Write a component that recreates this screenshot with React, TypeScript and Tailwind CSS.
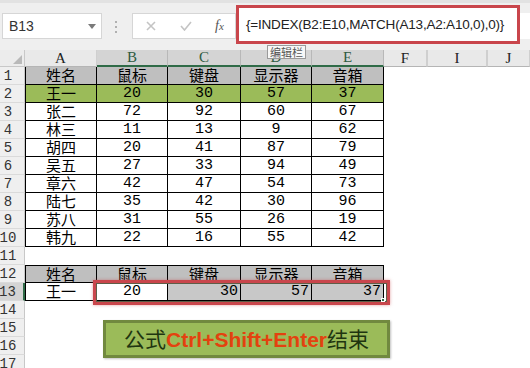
import React from 'react';

const GRID = 'grid grid-cols-[25px_72px_71px_73px_71px_72px_43px_60px_1fr]';
const CJK = "font-['Noto_Sans_CJK_SC',sans-serif]";
const MONO = "font-['Liberation_Mono',monospace]";

type Kind = 'head' | 'green' | 'data' | 'empty' | 'result';

interface SheetRow {
  n: number;
  kind: Kind;
  cells?: (string | number)[];
}

const header = ['姓名', '鼠标', '键盘', '显示器', '音箱'];

const rows: SheetRow[] = [
  { n: 1, kind: 'head', cells: header },
  { n: 2, kind: 'green', cells: ['王一', 20, 30, 57, 37] },
  { n: 3, kind: 'data', cells: ['张二', 72, 92, 60, 67] },
  { n: 4, kind: 'data', cells: ['林三', 11, 13, 9, 62] },
  { n: 5, kind: 'data', cells: ['胡四', 20, 41, 87, 79] },
  { n: 6, kind: 'data', cells: ['吴五', 27, 33, 94, 49] },
  { n: 7, kind: 'data', cells: ['章六', 42, 47, 54, 73] },
  { n: 8, kind: 'data', cells: ['陆七', 35, 42, 30, 96] },
  { n: 9, kind: 'data', cells: ['苏八', 31, 55, 26, 19] },
  { n: 10, kind: 'data', cells: ['韩九', 22, 16, 55, 42] },
  { n: 11, kind: 'empty' },
  { n: 12, kind: 'head', cells: header },
  { n: 13, kind: 'result', cells: ['王一', 20, 30, 57, 37] },
  { n: 14, kind: 'empty' },
  { n: 15, kind: 'empty' },
  { n: 16, kind: 'empty' },
  { n: 17, kind: 'empty' },
];

const columns = [
  { label: 'A', selected: false },
  { label: 'B', selected: true },
  { label: 'C', selected: true },
  { label: 'D', selected: true },
  { label: 'E', selected: true },
  { label: 'F', selected: false },
  { label: 'I', selected: false },
  { label: 'J', selected: false },
];

const Toolbar: React.FC = () => (
  <div className="h-[50px] flex items-start bg-[#efefef] border-t-[3px] border-[#e2e2e2]">
    <div className="ml-[2px] mt-[10px] w-[100px] h-[26px] bg-white border border-[#d6d6d6] flex items-center justify-between pl-[6px] pr-[5px]">
      <span className="font-['Liberation_Sans',sans-serif] text-[14px] leading-[16px] text-[#333]">B13</span>
      <svg width="8" height="5" viewBox="0 0 8 5">
        <path d="M0 0h8L4 5z" fill="#7a7a7a" />
      </svg>
    </div>
    <div className="ml-[13px] mt-[18px] flex flex-col gap-[3px]">
      <span className="w-[2px] h-[2px] bg-[#b0b0b0]" />
      <span className="w-[2px] h-[2px] bg-[#b0b0b0]" />
      <span className="w-[2px] h-[2px] bg-[#b0b0b0]" />
    </div>
    <div className="ml-[15px] mt-[10px] w-[104px] h-[26px] bg-white border border-[#d6d6d6] flex items-center">
      <svg className="ml-[13px]" width="10" height="10" viewBox="0 0 10 10">
        <path d="M1 1l8 8M9 1l-8 8" stroke="#c4c4c4" strokeWidth="1.6" />
      </svg>
      <svg className="ml-[24px]" width="12" height="10" viewBox="0 0 12 10">
        <path d="M1 5l3.5 4L11 1" stroke="#c4c4c4" strokeWidth="1.6" fill="none" />
      </svg>
      <span className="ml-[23px] font-['Liberation_Serif',serif] italic text-[14px] leading-[16px] text-[#555]">
        f<span className="text-[11px]">x</span>
      </span>
    </div>
    <div className="mt-[2px] w-[284px] h-[39px] bg-white border-[3px] border-[#c9464c] flex items-center pl-[7px]">
      <span className="font-['Liberation_Sans',sans-serif] text-[13.5px] leading-[16px] text-[#222] tracking-[-0.2px]">
        {'{=INDEX(B2:E10,MATCH(A13,A2:A10,0),0)}'}
      </span>
    </div>
    <div className="flex-1 mt-[10px] h-[26px] bg-white" />
  </div>
);

const ColumnHeader: React.FC = () => (
  <div className={`${GRID} h-[17px]`}>
    <div className="bg-[#ececec] border-r border-b border-[#c8c8c8] flex items-end justify-end pr-[2px] pb-[2px]">
      <svg width="9" height="9" viewBox="0 0 9 9">
        <path d="M9 0v9H0z" fill="#b9b9b9" />
      </svg>
    </div>
    {columns.map((c, i) => (
      <div
        key={c.label}
        className={`flex items-center justify-center font-['Liberation_Serif',serif] text-[15px] leading-[15px] ${
          c.selected
            ? 'bg-[#d4d4d4] text-[#2e5a40] border-b-2 border-[#2f6b47] border-r border-r-[#b8b8b8]'
            : 'bg-[#e9e9e9] text-[#222] border-b border-[#b5b5b5] border-r border-r-[#cfcfcf]'
        } ${i >= 6 ? 'border-l border-l-[#cfcfcf]' : ''}`}
      >
        {c.label}
      </div>
    ))}
  </div>
);

const Cell: React.FC<{ value?: string | number; kind: Kind; col: number; rowNum: number }> = ({
  value,
  kind,
  col,
  rowNum,
}) => {
  const isText = typeof value === 'string';
  const font = isText ? `${CJK} text-[15px] leading-[15px] pb-[2px]` : `${MONO} text-[15px] leading-[15px]`;
  let bg = 'bg-white';
  if (kind === 'head') bg = 'bg-[#bfbfbf]';
  if (kind === 'green') bg = 'bg-[#9bbb59]';
  if (kind === 'result' && col >= 2) bg = 'bg-[#c8c8c8]';
  const align = kind === 'result' && col >= 2 ? 'justify-end pr-[2px]' : 'justify-center';
  const top = rowNum === 12 ? 'border-t' : '';
  const left = col === 0 ? 'border-l' : '';
  return (
    <div
      className={`h-[18px] flex items-center ${align} ${bg} ${font} text-black border-r border-b border-black ${top} ${left}`}
    >
      {value}
    </div>
  );
};

const Row: React.FC<{ row: SheetRow }> = ({ row }) => {
  const active = row.n === 13;
  return (
    <div className={`${GRID} h-[18px]`}>
      <div
        className={`h-[18px] flex items-center justify-center pr-[8px] ${MONO} text-[14px] leading-[16px] text-[#333] border-b border-[#dadada] ${
          active ? 'bg-[#d4d4d4] border-r-2 border-r-[#2f6b47]' : 'bg-[#efefef] border-r border-r-[#c8c8c8]'
        }`}
      >
        {row.n}
      </div>
      {row.cells
        ? row.cells.map((v, i) => <Cell key={i} value={v} kind={row.kind} col={i} rowNum={row.n} />)
        : [0, 1, 2, 3, 4].map((i) => <div key={i} className="h-[18px] bg-white" />)}
      <div className="bg-white" />
      <div className="bg-white" />
      <div className="bg-white" />
    </div>
  );
};

export default function App() {
  return (
    <div className="relative w-[530px] h-[368px] overflow-hidden bg-white">
      <Toolbar />
      <ColumnHeader />
      {rows.map((r) => (
        <Row key={r.n} row={r} />
      ))}

      {/* tooltip */}
      <div className="absolute left-[267px] top-[45px] h-[14px] px-[2px] bg-[#f7f7f7] border border-[#9a9a9a] flex items-center">
        <span className={`${CJK} text-[11px] leading-[12px] text-[#555]`}>编辑栏</span>
      </div>

      {/* red annotation around B13:E13 */}
      <div className="absolute left-[93px] top-[280px] w-[297px] h-[25px] border-[3px] border-[#c9464c] shadow-[inset_0_0_0_1px_#5e5e48,0_0_3px_rgba(200,70,76,0.5)]" />
      <div className="absolute left-[381px] top-[298px] w-[4px] h-[4px] bg-[#2f6b47] border border-white" />

      {/* green note shape */}
      <div className="absolute left-[103px] top-[320px] w-[287px] h-[38px] bg-[#9bbb59] border-[3px] border-[#71893f] shadow-[1px_1px_2px_rgba(0,0,0,0.25)] flex items-center justify-center">
        <span className={`${CJK} text-[21px] leading-[26px] text-[#1f3510]`}>
          公式
          <span className="font-['Liberation_Sans',sans-serif] font-bold text-[#e3420f]">Ctrl+Shift+Enter</span>
          结束
        </span>
      </div>
    </div>
  );
}
